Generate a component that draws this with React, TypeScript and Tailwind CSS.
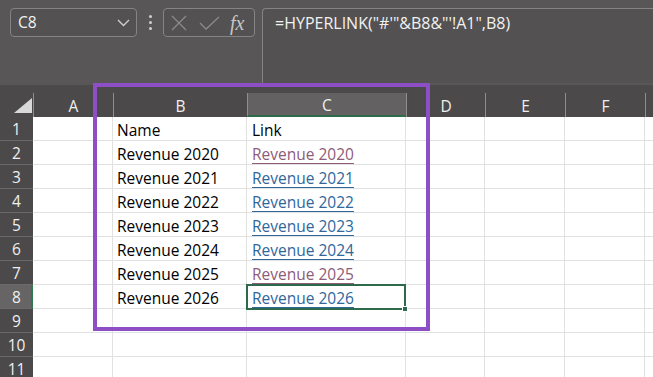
import React from "react";

const cols = [
  { key: "A", w: "w-[80px]" },
  { key: "B", w: "w-[134px]" },
  { key: "C", w: "w-[159px]" },
  { key: "D", w: "w-[79px]" },
  { key: "E", w: "w-[80px]" },
  { key: "F", w: "w-[80px]" },
];

type Row = { n: number; b?: string; c?: string; visited?: boolean; header?: boolean };

const rows: Row[] = [
  { n: 1, b: "Name", c: "Link", header: true },
  { n: 2, b: "Revenue 2020", c: "Revenue 2020", visited: true },
  { n: 3, b: "Revenue 2021", c: "Revenue 2021" },
  { n: 4, b: "Revenue 2022", c: "Revenue 2022" },
  { n: 5, b: "Revenue 2023", c: "Revenue 2023" },
  { n: 6, b: "Revenue 2024", c: "Revenue 2024" },
  { n: 7, b: "Revenue 2025", c: "Revenue 2025", visited: true },
  { n: 8, b: "Revenue 2026", c: "Revenue 2026" },
  { n: 9 },
  { n: 10 },
  { n: 11 },
];

function Toolbar() {
  return (
    <div className="flex h-[85px] items-start bg-[#585656] pl-[10px] pt-[8px]">
      {/* name box */}
      <div className="flex h-[29px] w-[127px] items-center justify-between rounded-[4px] border border-[#858383] bg-[#535151] pl-[7px] pr-[6px]">
        <span className="text-[15.5px] text-[#f2f2f2]">C8</span>
        <svg width="13" height="8" viewBox="0 0 13 8">
          <polyline points="1,1 6.5,6.5 12,1" fill="none" stroke="#cfcfcf" strokeWidth="1.4" />
        </svg>
      </div>
      {/* dots */}
      <div className="flex h-[29px] w-[26px] flex-col items-center justify-center gap-[3px]">
        <span className="h-[3px] w-[3px] rounded-full bg-[#d0d0d0]" />
        <span className="h-[3px] w-[3px] rounded-full bg-[#d0d0d0]" />
        <span className="h-[3px] w-[3px] rounded-full bg-[#d0d0d0]" />
      </div>
      {/* cancel / enter / fx */}
      <div className="flex h-[29px] w-[92px] items-center rounded-[4px] border border-[#858383] bg-[#535151] pl-[7px]">
        <svg width="16" height="16" viewBox="0 0 16 16">
          <line x1="1" y1="1" x2="15" y2="15" stroke="#8c8a8a" strokeWidth="1.3" />
          <line x1="15" y1="1" x2="1" y2="15" stroke="#8c8a8a" strokeWidth="1.3" />
        </svg>
        <svg width="21" height="14" viewBox="0 0 21 14" className="ml-[12px]">
          <polyline points="1,7 7,13 20,1" fill="none" stroke="#8c8a8a" strokeWidth="1.3" />
        </svg>
        <span className="ml-[10px] font-['Liberation_Serif',serif] text-[20px] italic leading-none text-[#c8c6c6]">
          fx
        </span>
      </div>
      {/* formula */}
      <div className="ml-[7px] h-[75px] flex-1 rounded-tl-[4px] border-l border-t border-[#858383] bg-[#535151] pl-[12px] pt-[2px]">
        <span className="text-[16px] text-[#f2f2f2]">=HYPERLINK("#'"&amp;B8&amp;"'!A1",B8)</span>
      </div>
    </div>
  );
}

function Sheet() {
  return (
    <div className="bg-[#4b4949] pt-[8px]">
      {/* column headers */}
      <div className="flex h-[24px]">
        <div className="flex w-[33px] items-end justify-end pb-[4px] pr-[1px]">
          <svg width="18" height="15" viewBox="0 0 18 15">
            <polygon points="0,15 18,15 18,0" fill="#d9d9d9" />
          </svg>
        </div>
        {cols.map((c) => (
          <div
            key={c.key}
            className={`${c.w} flex items-center justify-center border-l border-[#8f8d8d] text-[15.5px] leading-[24px] text-[#f0f0f0] ${
              c.key === "C" ? "border-b-2 border-b-[#2e6b4b] bg-[#636161] pt-[2px]" : "pt-[2px]"
            }`}
          >
            {c.key}
          </div>
        ))}
        <div className="flex-1 border-l border-[#8f8d8d]" />
      </div>
      {/* rows */}
      {rows.map((r) => (
        <div key={r.n} className="flex h-[24px]">
          <div
            className={`flex w-[33px] items-center justify-center border-b border-[#6b6969] text-[15.5px] leading-[24px] text-[#f0f0f0] ${
              r.n === 8 ? "border-r-2 border-r-[#2e7a4f] bg-[#666464] pl-[2px]" : ""
            }`}
          >
            {r.n}
          </div>
          {cols.map((c) => (
            <div
              key={c.key}
              className={`${c.w} relative border-b border-r border-[#e1e1e1] bg-white pl-[4px] text-[15.5px] leading-[26px] whitespace-nowrap`}
            >
              {c.key === "B" && r.b && <span className="text-black">{r.b}</span>}
              {c.key === "C" && r.c &&
                (r.header ? (
                  <span className="pl-[1px] text-black">{r.c}</span>
                ) : (
                  <span
                    className={`pl-[1px] underline underline-offset-[3px] ${
                      r.visited ? "text-[#8e5b79]" : "text-[#2f679b]"
                    }`}
                  >
                    {r.c}
                  </span>
                ))}
              {c.key === "C" && r.n === 8 && (
                <div className="absolute -left-[1px] -top-[1px] z-10 h-[26px] w-[160px] border-2 border-[#2d6a4b]">
                  <div className="absolute -bottom-[4px] -right-[4px] h-[6px] w-[6px] border border-white bg-[#2d6a4b]" />
                </div>
              )}
            </div>
          ))}
          <div className="flex-1 border-b border-[#e1e1e1] bg-white" />
        </div>
      ))}
    </div>
  );
}

export default function App() {
  return (
    <div className="relative h-[377px] w-[653px] overflow-hidden bg-white font-['Open_Sans',sans-serif]">
      <Toolbar />
      <Sheet />
      {/* highlight annotation */}
      <div className="absolute left-[93px] top-[83px] z-20 h-[248px] w-[337px] border-4 border-[#8e4ec6]" />
    </div>
  );
}
